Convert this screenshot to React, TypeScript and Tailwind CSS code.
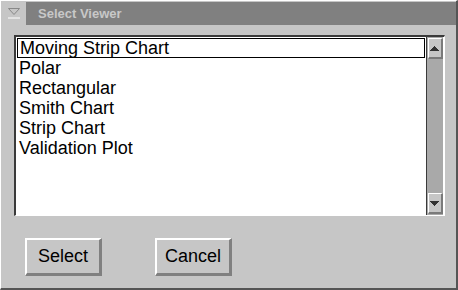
const viewers = ['Moving Strip Chart', 'Polar', 'Rectangular', 'Smith Chart', 'Strip Chart', 'Validation Plot']

const ArrowButton = ({ down }: { down?: boolean }) => (
  <div className="flex h-[21px] w-[15px] items-center justify-center border-t border-l border-white border-r-2 border-b-2 border-r-[#7a7a7a] border-b-[#7a7a7a] bg-[#c6c6c6]">
    <svg width="9" height="5" viewBox="0 0 9 5" className={down ? 'rotate-180' : ''}>
      <path d="M4 0h1v1h1v1h1v1h1v1h1v1H0V4h1V3h1V2h1V1h1z" fill="#000" fillOpacity="0.75" />
    </svg>
  </div>
)

const App = () => {
  return (
    <div
      className="flex h-[290px] w-[458px] flex-col border-t border-l border-white border-r-2 border-b-2 border-r-[#555] border-b-[#555] bg-[#c6c6c6]"
      style={{ fontFamily: '"Liberation Sans", Arial, sans-serif' }}
    >
      {/* Title bar */}
      <div className="flex h-[24px] items-stretch pt-[1px]">
        <div className="flex w-[25px] flex-col items-center justify-center">
          <svg width="12" height="11" viewBox="0 0 12 11">
            <path d="M0.5 0.5h11L6 6.5z" fill="none" stroke="#888" />
            <path d="M0 10h12" stroke="#fff" strokeWidth="1" />
          </svg>
        </div>
        <div className="flex flex-1 items-center bg-[#808080] pl-[12px] text-[13px] font-bold text-[#c8c8c8]">
          Select Viewer
        </div>
      </div>

      {/* List box */}
      <div className="ml-[13px] mt-[10px] flex h-[181px] w-[431px] border-t-2 border-l-2 border-[#3a3a3a] border-r border-b border-r-white border-b-white">
        <div className="flex flex-1 flex-col bg-white pt-[1px] text-[18px] leading-[20px] text-black">
          {viewers.map((v, i) => (
            <div
              key={v}
              className={`h-[20px] pl-[2px] ${i === 0 ? 'mx-[1px] border border-black pl-[1px]' : 'ml-[1px]'}`}
            >
              <span className={i === 0 ? 'relative -top-[1px]' : ''}>{v}</span>
            </div>
          ))}
        </div>
        <div className="flex w-[18px] flex-col border-l border-[#3a3a3a] bg-[#c6c6c6]">
          <div className="flex flex-1 flex-col items-center justify-between border-r border-white bg-[#a9a9a9] py-[1px]">
            <ArrowButton />
            <ArrowButton down />
          </div>
        </div>
      </div>

      {/* Buttons */}
      <div className="mt-[22px] flex gap-[53px] pl-[24px]">
        {['Select', 'Cancel'].map((b) => (
          <button
            key={b}
            className="flex h-[38px] w-[77px] items-center justify-center border-t-2 border-l-2 border-white border-r-[3px] border-b-[3px] border-r-[#808080] border-b-[#808080] bg-[#c6c6c6] text-[18px] text-black"
          >
            {b}
          </button>
        ))}
      </div>
    </div>
  )
}

export default App
